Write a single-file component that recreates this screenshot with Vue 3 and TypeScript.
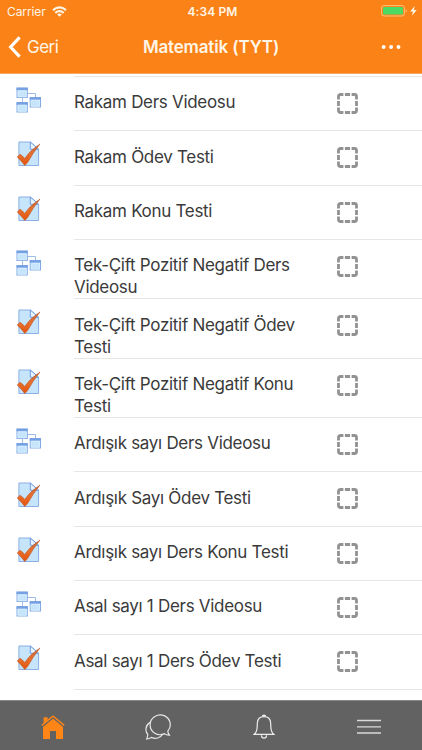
<script setup lang="ts">
type Kind = 'lesson' | 'quiz'
interface Item {
  kind: Kind
  title: string
}
const items: Item[] = [
  { kind: 'lesson', title: 'Rakam Ders Videosu' },
  { kind: 'quiz', title: 'Rakam Ödev Testi' },
  { kind: 'quiz', title: 'Rakam Konu Testi' },
  { kind: 'lesson', title: 'Tek-Çift Pozitif Negatif Ders Videosu' },
  { kind: 'quiz', title: 'Tek-Çift Pozitif Negatif Ödev Testi' },
  { kind: 'quiz', title: 'Tek-Çift Pozitif Negatif Konu Testi' },
  { kind: 'lesson', title: 'Ardışık sayı Ders Videosu' },
  { kind: 'quiz', title: 'Ardışık Sayı Ödev Testi' },
  { kind: 'quiz', title: 'Ardışık sayı Ders Konu Testi' },
  { kind: 'lesson', title: 'Asal sayı 1 Ders Videosu' },
  { kind: 'quiz', title: 'Asal sayı 1 Ders Ödev Testi' },
  { kind: 'lesson', title: '' },
]
</script>

<template>
  <div class="screen">
    <header class="header">
      <div class="status">
        <div class="carrier">
          <span>Carrier</span>
          <svg width="15" height="11" viewBox="0 0 15 11" fill="none" stroke="#fff5e6" stroke-width="2.2">
            <path d="M1 4.1Q7.5-1.4 14 4.1" />
            <path d="M3.3 6.9Q7.5 3.4 11.7 6.9" />
            <path d="M5.2 8.4Q7.5 6.6 9.8 8.4L7.5 10.8Z" fill="#fff5e6" stroke="none" />
          </svg>
        </div>
        <span class="clock">4:34 PM</span>
        <svg class="battery" width="37" height="12" viewBox="0 0 37 12">
          <rect x=".6" y=".6" width="22.8" height="10.4" rx="2.4" fill="none" stroke="#fdc178" />
          <rect x="2" y="2" width="20" height="7.6" rx="1.2" fill="#4cd964" />
          <path d="M24.8 4v3.8q2-1.9 0-3.8" fill="#fdc178" />
          <path d="M33.8 1 29.2 6.5h2.8L30.9 10.8 35.7 5h-2.9Z" fill="#fff8e8" />
        </svg>
      </div>
      <div class="nav">
        <div class="back">
          <svg width="13" height="22" viewBox="0 0 13 22" fill="none" stroke="#fff" stroke-width="3.1">
            <path d="M11.6 1.4 2.6 11l9 9.6" />
          </svg>
          <span>Geri</span>
        </div>
        <h1>Matematik (TYT)</h1>
        <svg class="more" width="20" height="4" viewBox="0 0 20 4" fill="#fff">
          <circle cx="2.6" cy="2" r="1.95" />
          <circle cx="10.1" cy="2" r="1.95" />
          <circle cx="17.5" cy="2" r="1.95" />
        </svg>
      </div>
    </header>

    <main class="list">
      <div v-for="(item, i) in items" :key="i" class="row">
        <svg v-if="item.kind === 'lesson'" class="kind" width="26" height="26" viewBox="0 0 26 26">
          <path d="M11 6.5h8.5V10M6.5 10v6" fill="none" stroke="#9fbce9" />
          <g fill="#c6e5fc" stroke="#84a9e3">
            <rect x="1" y="1" width="10.3" height="9.5" />
            <rect x="1" y="15.5" width="10.3" height="9.5" />
            <rect x="14.2" y="10.5" width="10.3" height="9.5" />
          </g>
          <path d="M.6 2h11.1M.6 16.5h11.1M13.8 11.5h11.1" stroke="#75a0e4" stroke-width="2.6" />
          <path d="M2 3.8h8.3v6H2zM2 18.3h8.3v6H2zM15.2 13.3h8.3v6h-8.3z" fill="none" stroke="#d9effe" stroke-width=".8" />
        </svg>
        <svg v-else class="kind" width="26" height="26" viewBox="0 0 26 26">
          <defs>
            <linearGradient id="tick" x1="0" y1="0" x2="0" y2="1">
              <stop offset="0" stop-color="#bf6b46" />
              <stop offset=".5" stop-color="#e8702c" />
              <stop offset="1" stop-color="#e2530d" />
            </linearGradient>
          </defs>
          <path d="M2.9 1h11.4l8.3 7.3v16.2H2.9Z" fill="#c6e5fb" stroke="#8bafe5" />
          <path d="M14.3 1v7.3h8.3Z" fill="#e6f4ff" stroke="#719ce0" />
          <path d="M1.2 15.9 4 13.2Q6.8 14.8 8.6 17.4 14.2 9.2 24 3 17.4 11.2 11.6 21.6L8.8 24.6Q5.4 20 1.2 15.9Z" fill="url(#tick)" stroke="#b94f1c" stroke-width=".5" />
        </svg>
        <div class="content">
          <p>{{ item.title }}</p>
          <svg class="check" width="21" height="21" viewBox="0 0 21 21" fill="none" stroke="#929292" stroke-width="2.8">
            <path d="M1.5 6.4V3.5q0-2 2-2H6.4M14.6 1.5h2.9q2 0 2 2V6.4M19.5 14.6v2.9q0 2-2 2H14.6M6.4 19.5H3.5q-2 0-2-2V14.6M7.9 1.5h5.2M19.5 7.9v5.2M13.1 19.5H7.9M1.5 13.1V7.9" />
          </svg>
        </div>
      </div>
    </main>

    <nav class="tabs">
      <div class="tab">
        <svg width="24" height="26" viewBox="0 0 24 26" fill="#ff8517">
          <path d="M2.6 3.2h4v4L2.6 10.5ZM12 4.6 22 12.8V25h-7v-8H9v8H2V12.8Z" />
          <path d="M.8 11.3 12 2.1l11.2 9.2" fill="none" stroke="#ff8517" stroke-width="1.5" />
          <path d="M1 12.9 12 3.9l11 9" fill="none" stroke="#626262" stroke-width=".8" />
        </svg>
      </div>
      <div class="tab">
        <svg width="26" height="26" viewBox="0 0 26 26" fill="none" stroke="#e6e6e6" stroke-width="1.2">
          <path d="M5.1 8.4C.2 11 0 17.6 2.8 20.3Q2.6 23 1.7 25 4.7 24.9 6.4 23.4C10.5 25.4 15.5 24 17.4 20.5" />
          <path d="M22.8 17.1C27.1 12.3 25.6 5.1 19.8 1.9 12.9-1.3 5.1 3.5 5.1 10.7 5.1 18.3 12.8 22.9 19.5 19.6Q21.4 21.3 24.5 21.1 23 19.3 22.8 17.1Z" />
        </svg>
      </div>
      <div class="tab">
        <svg width="22" height="26" viewBox="0 0 22 26" fill="none" stroke="#ededed" stroke-width="1.2">
          <path d="M1.2 20.3C5 17.5 3.9 13.5 4.4 8.5 4.8 4.8 7.2 2.6 11 2.6s6.2 2.2 6.6 5.9C18.1 13.5 17 17.5 20.8 20.3Z" />
          <path d="M9.7 2.6V1.5q1.3-.8 2.6 0v1.1" fill="#ededed" />
          <path d="M8.4 21.2q.2 3 2.6 3t2.6-3" />
        </svg>
      </div>
      <div class="tab">
        <svg width="24" height="16" viewBox="0 0 24 16" fill="none" stroke="#d9d9d9" stroke-width="1.4">
          <path d="M0 1.5h24M0 7.9h24M0 14h24" />
        </svg>
      </div>
    </nav>
  </div>
</template>

<style>
body {
  margin: 0;
  background: #fff;
}
</style>

<style scoped>
.screen {
  width: 422px;
  height: 750px;
  display: flex;
  flex-direction: column;
  overflow: hidden;
  background: #fff;
  color: #3a3a3a;
  font-family: Inter, "Liberation Sans", sans-serif;
}
.header {
  flex: none;
  height: 74px;
  box-sizing: border-box;
  border-bottom: 1px solid #f9a866;
  background: #fb8217;
  color: #fff5e6;
}
.status {
  height: 22px;
  padding: 0 4px 0 7px;
  display: grid;
  grid-template-columns: 1fr auto 1fr;
  align-items: center;
  font-size: 12px;
}
.carrier {
  display: flex;
  align-items: center;
  gap: 6px;
  letter-spacing: -0.1px;
}
.clock {
  font-weight: 600;
  letter-spacing: 0.1px;
}
.battery {
  justify-self: end;
}
.nav {
  height: 50px;
  padding: 0 8px;
  display: grid;
  grid-template-columns: 1fr auto 1fr;
  align-items: center;
}
.back {
  display: flex;
  align-items: center;
  gap: 6px;
  font-size: 17px;
  letter-spacing: -0.5px;
}
h1 {
  margin: 0;
  font-size: 17px;
  font-weight: 600;
  letter-spacing: -0.15px;
}
.more {
  justify-self: end;
  margin-right: 13px;
}
.list {
  flex: 1;
  min-height: 0;
  overflow: hidden;
  padding-top: 1.9px;
}
.row {
  display: flex;
  align-items: flex-start;
}
.kind {
  flex: none;
  margin: 11px 32px 0 16px;
}
.content {
  flex: 1;
  display: flex;
  align-items: flex-start;
  box-sizing: border-box;
  min-height: 54.33px;
  padding: 15px 0 0;
  border-top: 1px solid #e6e6e6;
}
p {
  width: 236px;
  margin: -0.5px 27px -0.17px 0;
  font-size: 17px;
  letter-spacing: -0.3px;
  line-height: 22px;
}
.check {
  flex: none;
  margin-top: 1px;
}
.tabs {
  flex: none;
  height: 50px;
  box-sizing: border-box;
  border-top: 1px solid #888;
  display: grid;
  grid-template-columns: repeat(4, 1fr);
  background: #626262;
}
.tab {
  display: flex;
  align-items: center;
  justify-content: center;
  padding-top: 3px;
}
</style>
